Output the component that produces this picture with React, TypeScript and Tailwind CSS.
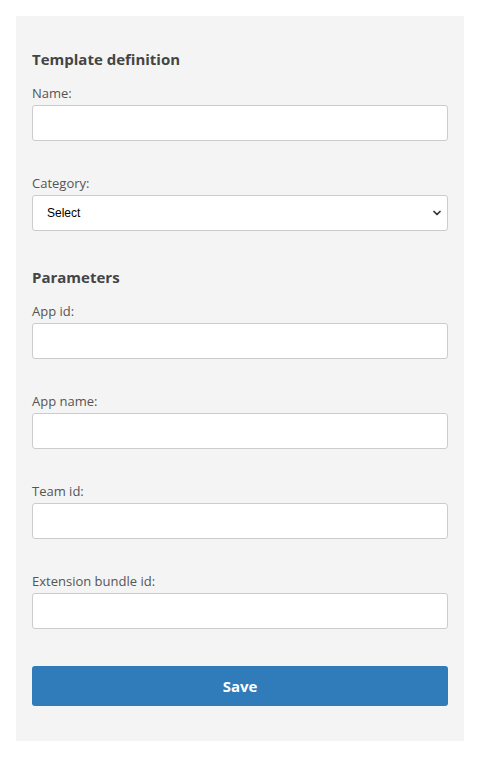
import { ChevronDown } from 'lucide-react';

const Field = ({ label }: { label: string }) => (
  <div className="flex flex-col">
    <label className="text-[13px] leading-[18px] text-[#555] mb-[3px]">{label}</label>
    <input type="text" className="h-9 w-full rounded-[3px] border border-[#ccc] bg-white px-3 text-[13px] outline-none" />
  </div>
);

export default function App() {
  return (
    <div className="min-h-screen bg-white p-4 font-['Open_Sans',sans-serif]">
      <div className="w-[448px] bg-[#f4f4f4] px-4 pt-[33px] pb-[35px]">
        <h3 className="text-[15px] leading-5 font-bold text-[#444] mb-[15px]">Template definition</h3>
        <div className="flex flex-col gap-[33px]">
          <Field label="Name:" />
          <div className="flex flex-col">
            <label className="text-[13px] leading-[18px] text-[#555] mb-[3px]">Category:</label>
            <div className="relative">
              <select className="h-9 w-full appearance-none rounded-[3px] border border-[#ccc] bg-white pl-[14px] text-[12px] text-black font-['Liberation_Sans',sans-serif] outline-none">
                <option>Select</option>
              </select>
              <ChevronDown size={12} strokeWidth={3.5} className="pointer-events-none absolute right-[5px] top-1/2 -translate-y-1/2 text-[#333]" />
            </div>
          </div>
        </div>

        <h3 className="text-[15px] leading-5 font-bold text-[#444] mt-9 mb-[15px]">Parameters</h3>
        <div className="flex flex-col gap-[33px]">
          <Field label="App id:" />
          <Field label="App name:" />
          <Field label="Team id:" />
          <Field label="Extension bundle id:" />
        </div>

        <button className="mt-[37px] h-10 w-full rounded-[3px] bg-[#307bba] text-[15px] font-bold text-white">
          Save
        </button>
      </div>
    </div>
  );
}
